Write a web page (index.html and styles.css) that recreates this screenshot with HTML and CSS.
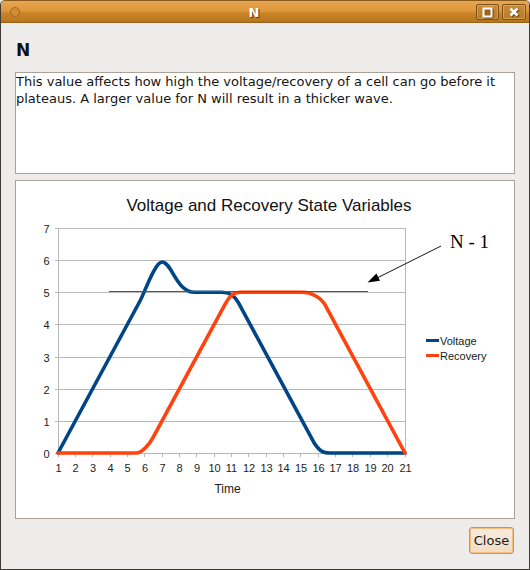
FILE: index.html
```html
<!DOCTYPE html>
<html>
<head>
<meta charset="utf-8">
<title>N</title>
<link rel="stylesheet" href="styles.css">
</head>
<body>
<div class="window">
  <div class="titlebar">
    <span class="menu-dot"></span>
    <span class="title">N</span>
    <div class="wm-buttons">
      <span class="wm-btn">
        <svg width="21" height="15" viewBox="0 0 21 15"><rect x="6.5" y="3.5" width="8" height="8" fill="none" stroke="#6b4512" stroke-width="2" transform="translate(1,1)"/><rect x="6.5" y="3.5" width="8" height="8" fill="#9a6420" stroke="#ffffff" stroke-width="2"/></svg>
      </span>
      <span class="wm-btn">
        <svg width="22" height="15" viewBox="0 0 22 15"><path d="M7.5 3.5 L14.5 10.5 M14.5 3.5 L7.5 10.5" stroke="#6b4512" stroke-width="2.6" transform="translate(1,1)"/><path d="M7.5 3.5 L14.5 10.5 M14.5 3.5 L7.5 10.5" stroke="#ffffff" stroke-width="2.6"/></svg>
      </span>
    </div>
  </div>
  <div class="content">
    <h1 class="heading">N</h1>
    <div class="desc">This value affects how high the voltage/recovery of a cell can go before it plateaus. A larger value for N will result in a thicker wave.</div>
    <div class="chart-panel">
      <svg class="chart" width="498" height="337" viewBox="16 181 498 337">
        <text class="chart-title" x="269" y="211" text-anchor="middle">Voltage and Recovery State Variables</text>
        <g class="grid">
          <line x1="55" y1="228.5" x2="405.5" y2="228.5"/>
          <line x1="55" y1="260.5" x2="405.5" y2="260.5"/>
          <line x1="55" y1="292.5" x2="405.5" y2="292.5"/>
          <line x1="55" y1="324.5" x2="405.5" y2="324.5"/>
          <line x1="55" y1="357.5" x2="405.5" y2="357.5"/>
          <line x1="55" y1="389.5" x2="405.5" y2="389.5"/>
          <line x1="55" y1="421.5" x2="405.5" y2="421.5"/>
          <line x1="55" y1="453.5" x2="405.5" y2="453.5"/>
          <line x1="58.5" y1="228" x2="58.5" y2="457"/>
          <line x1="405.5" y1="228" x2="405.5" y2="457"/>
          <line x1="75.5" y1="453" x2="75.5" y2="457"/>
          <line x1="92.5" y1="453" x2="92.5" y2="457"/>
          <line x1="110.5" y1="453" x2="110.5" y2="457"/>
          <line x1="127.5" y1="453" x2="127.5" y2="457"/>
          <line x1="144.5" y1="453" x2="144.5" y2="457"/>
          <line x1="162.5" y1="453" x2="162.5" y2="457"/>
          <line x1="179.5" y1="453" x2="179.5" y2="457"/>
          <line x1="196.5" y1="453" x2="196.5" y2="457"/>
          <line x1="214.5" y1="453" x2="214.5" y2="457"/>
          <line x1="231.5" y1="453" x2="231.5" y2="457"/>
          <line x1="248.5" y1="453" x2="248.5" y2="457"/>
          <line x1="266.5" y1="453" x2="266.5" y2="457"/>
          <line x1="283.5" y1="453" x2="283.5" y2="457"/>
          <line x1="300.5" y1="453" x2="300.5" y2="457"/>
          <line x1="318.5" y1="453" x2="318.5" y2="457"/>
          <line x1="335.5" y1="453" x2="335.5" y2="457"/>
          <line x1="352.5" y1="453" x2="352.5" y2="457"/>
          <line x1="370.5" y1="453" x2="370.5" y2="457"/>
          <line x1="387.5" y1="453" x2="387.5" y2="457"/>
        </g>
        <g class="ylabels" text-anchor="end">
          <text x="49.5" y="233">7</text>
          <text x="49.5" y="265">6</text>
          <text x="49.5" y="297">5</text>
          <text x="49.5" y="329">4</text>
          <text x="49.5" y="362">3</text>
          <text x="49.5" y="394">2</text>
          <text x="49.5" y="426">1</text>
          <text x="49.5" y="458">0</text>
        </g>
        <g class="xlabels" text-anchor="middle">
          <text x="58.5" y="472">1</text>
          <text x="75.5" y="472">2</text>
          <text x="93" y="472">3</text>
          <text x="110.5" y="472">4</text>
          <text x="127.5" y="472">5</text>
          <text x="145" y="472">6</text>
          <text x="162.5" y="472">7</text>
          <text x="179.5" y="472">8</text>
          <text x="197" y="472">9</text>
          <text x="214.5" y="472">10</text>
          <text x="231.5" y="472">11</text>
          <text x="249" y="472">12</text>
          <text x="266.5" y="472">13</text>
          <text x="283.5" y="472">14</text>
          <text x="301" y="472">15</text>
          <text x="318.5" y="472">16</text>
          <text x="335.5" y="472">17</text>
          <text x="353" y="472">18</text>
          <text x="370.5" y="472">19</text>
          <text x="387.5" y="472">20</text>
          <text x="405.5" y="472">21</text>
        </g>
        <text class="axis-title" x="227.5" y="493" text-anchor="middle">Time</text>
        <path class="series voltage" d="M58,453 L140,301 C145,291.7 155,262 162,262 C172,262 176,292.3 195,292.3 L222,292.3 C229,292.3 234.4,295.3 238.4,302.7 L314.4,443.4 C319,450 322,453 330,453 L405,453"/>
        <path class="series recovery" d="M58,453 L136,453 C142,453 149.4,444.3 153.4,436.9 L224.6,305.2 C228.6,297.8 232,292.3 241,292.3 L302.6,292.3 C311.6,292.3 321.2,297.8 325.2,305.2 L405,453"/>
        <line class="nline" x1="109" y1="291.5" x2="368" y2="291.5"/>
        <line class="arrow" x1="441" y1="246" x2="378" y2="277.5"/>
        <polygon class="arrowhead" points="367.5,282.5 380,280.7 376.4,273.5"/>
        <text class="annot" x="450" y="248">N - 1</text>
        <line class="legend-voltage" x1="426" y1="340.5" x2="439" y2="340.5"/>
        <text class="legend" x="440" y="345">Voltage</text>
        <line class="legend-recovery" x1="426" y1="355.5" x2="439" y2="355.5"/>
        <text class="legend" x="440" y="359.5">Recovery</text>
      </svg>
    </div>
    <div class="actions">
      <button class="close-btn">Close</button>
    </div>
  </div>
</div>
</body>
</html>
```
FILE: styles.css
```css
html, body {
  margin: 0;
  padding: 0;
  background: #edeceb;
}

.window {
  width: 530px;
  height: 570px;
  box-sizing: border-box;
  border: 1px solid #3d3b38;
  border-top-color: #8a5a1c;
  border-radius: 5px 5px 0 0;
  background: #edeceb;
  display: flex;
  flex-direction: column;
  overflow: hidden;
}

.titlebar {
  height: 22px;
  flex: none;
  display: flex;
  align-items: center;
  background: linear-gradient(#e6a650 0, #df973c 45%, #c98427 55%, #bb7820 92%, #8e5c19 100%);
  position: relative;
}

.menu-dot {
  width: 8px;
  height: 8px;
  margin-left: 9px;
  border-radius: 50%;
  border: 1px solid #a06a24;
  background: #d18c34;
  flex: none;
}

.title {
  flex: 1;
  text-align: center;
  padding-left: 12px;
  font-family: "DejaVu Sans", sans-serif;
  font-weight: bold;
  font-size: 13px;
  color: #ffffff;
  text-shadow: 1px 1px 0 #5a3a10;
}

.wm-buttons {
  display: flex;
  gap: 3px;
  margin-right: 3px;
  flex: none;
}

.wm-btn {
  display: flex;
  box-sizing: border-box;
  height: 16px;
  border: 1px solid #7a5018;
  border-radius: 2px;
  background: linear-gradient(#c98a36, #b87a26);
  box-shadow: inset 0 0 0 1px rgba(255, 220, 160, 0.35);
}

.wm-btn svg {
  display: block;
  margin-top: -0.5px;
}

.content {
  flex: 1;
  display: flex;
  flex-direction: column;
  padding: 17px 14px 0 14px;
}

.heading {
  margin: 0;
  height: 20px;
  font-family: "DejaVu Sans", sans-serif;
  font-weight: bold;
  font-size: 17px;
  line-height: 20px;
  color: #101010;
  padding-left: 1px;
}

.desc {
  margin-top: 12px;
  height: 102px;
  box-sizing: border-box;
  border: 1px solid #a8a29a;
  background: #ffffff;
  padding: 0 2px 0 0;
  font-family: "DejaVu Sans", sans-serif;
  font-size: 13px;
  line-height: 17px;
  color: #141414;
}

.chart-panel {
  margin-top: 6px;
  height: 339px;
  box-sizing: border-box;
  border: 1px solid #a8a29a;
  background: #ffffff;
}

.chart {
  display: block;
}

.chart text {
  font-family: "Liberation Sans", Arial, sans-serif;
  fill: #1a1a1a;
}

.chart .chart-title {
  font-size: 17px;
  fill: #111111;
}

.chart .ylabels text,
.chart .xlabels text {
  font-size: 11px;
  fill: #222222;
}

.chart .axis-title {
  font-size: 12px;
}

.chart .legend {
  font-size: 11px;
}

.chart .annot {
  font-family: "Liberation Serif", "Times New Roman", serif;
  font-size: 19px;
  fill: #000000;
}

.grid line {
  stroke: #b8b8b8;
  stroke-width: 1;
}

.series {
  fill: none;
  stroke-width: 3.6;
  stroke-linejoin: round;
  stroke-linecap: round;
}

.voltage {
  stroke: #004586;
}

.recovery {
  stroke: #ff420e;
}

.nline {
  stroke: #555555;
  stroke-width: 1;
}

.arrow {
  stroke: #111111;
  stroke-width: 1;
}

.arrowhead {
  fill: #000000;
}

.legend-voltage {
  stroke: #004586;
  stroke-width: 3;
}

.legend-recovery {
  stroke: #ff420e;
  stroke-width: 3;
}

.actions {
  display: flex;
  justify-content: flex-end;
  margin-top: 8px;
  padding-right: 1px;
}

.close-btn {
  width: 45px;
  height: 27px;
  box-sizing: border-box;
  margin: 0;
  padding: 0;
  border: 1px solid #a39c94;
  border-radius: 3px;
  background: linear-gradient(#f8ebdd, #f1dcc5);
  box-shadow: inset 0 0 0 1px #f5bf80;
  font-family: "DejaVu Sans", sans-serif;
  font-size: 13px;
  color: #1a1a1a;
}
```
